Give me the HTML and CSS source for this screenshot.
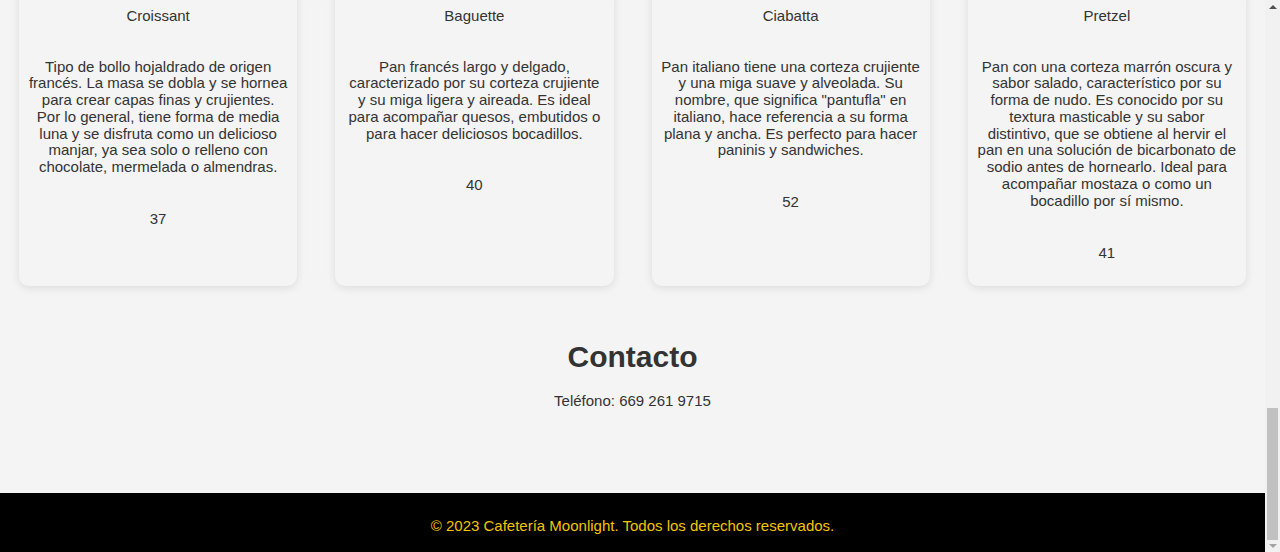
FILE: index.html
```html
<!DOCTYPE html>
<html lang="es">
<head>
<meta charset="utf-8">
<title>Cafetería Moonlight</title>
<link rel="stylesheet" href="styles.css">
</head>
<body>
<div class="viewport">
  <div class="page">
    <section class="products">
      <article class="card">
        <h3 class="card-title">Croissant</h3>
        <p class="card-desc">Tipo de bollo hojaldrado de origen francés. La masa se dobla y se hornea para crear capas finas y crujientes. Por lo general, tiene forma de media luna y se disfruta como un delicioso manjar, ya sea solo o relleno con chocolate, mermelada o almendras.</p>
        <p class="card-price">37</p>
      </article>
      <article class="card">
        <h3 class="card-title">Baguette</h3>
        <p class="card-desc">Pan francés largo y delgado, caracterizado por su corteza crujiente y su miga ligera y aireada. Es ideal para acompañar quesos, embutidos o para hacer deliciosos bocadillos.</p>
        <p class="card-price">40</p>
      </article>
      <article class="card">
        <h3 class="card-title">Ciabatta</h3>
        <p class="card-desc">Pan italiano tiene una corteza crujiente y una miga suave y alveolada. Su nombre, que significa "pantufla" en italiano, hace referencia a su forma plana y ancha. Es perfecto para hacer paninis y sandwiches.</p>
        <p class="card-price">52</p>
      </article>
      <article class="card">
        <h3 class="card-title">Pretzel</h3>
        <p class="card-desc">Pan con una corteza marrón oscura y sabor salado, característico por su forma de nudo. Es conocido por su textura masticable y su sabor distintivo, que se obtiene al hervir el pan en una solución de bicarbonato de sodio antes de hornearlo. Ideal para acompañar mostaza o como un bocadillo por sí mismo.</p>
        <p class="card-price">41</p>
      </article>
    </section>

    <section class="contact">
      <h2 class="contact-title">Contacto</h2>
      <p class="contact-phone">Teléfono: 669 261 9715</p>
    </section>

    <footer class="footer">
      <p class="footer-text">© 2023 Cafetería Moonlight. Todos los derechos reservados.</p>
    </footer>
  </div>

  <div class="scrollbar">
    <div class="sb-btn sb-up"><span class="tri-up"></span></div>
    <div class="sb-space"></div>
    <div class="sb-thumb"></div>
    <div class="sb-btn sb-down"><span class="tri-down"></span></div>
  </div>
</div>
</body>
</html>
```

FILE: styles.css
```css
* {
  box-sizing: border-box;
}

html, body {
  margin: 0;
  padding: 0;
  height: 552px;
  overflow: hidden;
}

body {
  background: #f4f4f4;
  font-family: "Liberation Sans", Arial, sans-serif;
  font-size: 15px;
  color: #333;
}

.viewport {
  display: flex;
  height: 552px;
}

.page {
  flex: 1;
  display: flex;
  flex-direction: column;
  height: 552px;
  overflow: hidden;
  background: #f4f4f4;
}

/* Products */
.products {
  display: grid;
  grid-template-columns: repeat(4, 1fr);
  gap: 38px;
  padding: 0 19px;
  margin-top: -13.5px;
}

.card {
  display: flex;
  flex-direction: column;
  background: #f4f4f4;
  border-radius: 10px;
  box-shadow: 0 2px 8px rgba(0, 0, 0, 0.1);
  padding: 20px 9.5px 25px;
  text-align: center;
}

.card-title {
  margin: 0 0 35px;
  font-size: 15px;
  font-weight: normal;
  line-height: 17px;
  color: #333;
}

.card-desc {
  margin: 0 0 34px;
  line-height: 16.8px;
  color: #333;
}

.card-price {
  margin: 0;
  line-height: 17px;
  color: #333;
}

/* Contact */
.contact {
  margin-top: 54px;
  text-align: center;
}

.contact-title {
  margin: 0;
  font-size: 30px;
  font-weight: bold;
  line-height: 34px;
  color: #333;
}

.contact-phone {
  margin: 18.5px 0 0;
  line-height: 17px;
  color: #333;
}

/* Footer */
.footer {
  margin-top: auto;
  background: #000;
  padding: 23.5px 0 18.5px;
  text-align: center;
}

.footer-text {
  margin: 0;
  line-height: 17px;
  color: #f5c400;
}

/* Scrollbar */
.scrollbar {
  width: 15px;
  flex: 0 0 15px;
  height: 552px;
  background: #f1f1f1;
  display: flex;
  flex-direction: column;
  align-items: center;
}

.sb-btn {
  width: 15px;
  display: flex;
  align-items: center;
  justify-content: center;
}

.sb-up {
  height: 12px;
  padding-top: 2px;
}

.sb-down {
  height: 12px;
}

.sb-space {
  flex: 1;
}

.sb-thumb {
  width: 11px;
  height: 132px;
  background: #c1c1c1;
}

.tri-up {
  width: 0;
  height: 0;
  border-left: 4px solid transparent;
  border-right: 4px solid transparent;
  border-bottom: 4px solid #505050;
}

.tri-down {
  width: 0;
  height: 0;
  border-left: 4px solid transparent;
  border-right: 4px solid transparent;
  border-top: 4px solid #a3a3a3;
}
```
